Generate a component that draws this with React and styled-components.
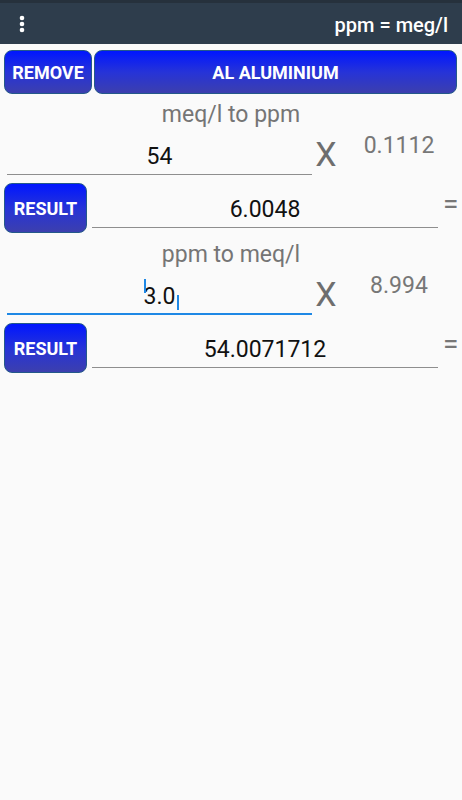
import React from 'react';
import styled, { createGlobalStyle } from 'styled-components';

const GlobalStyle = createGlobalStyle`
  body {
    margin: 0;
    background: #fafafa;
    font-family: Roboto, "Noto Sans", sans-serif;
  }
`;

const AppBar = styled.div`
  height: 41px;
  border-top: 3px solid #26313c;
  background: #2e3d4c;
  display: flex;
  align-items: center;
  justify-content: space-between;
  padding: 0 14px 0 18px;
`;

const BarTitle = styled.div`
  color: #fff;
  font-size: 20px;
  font-weight: 500;
  margin-top: 3px;
`;

const TopRow = styled.div`
  display: flex;
  gap: 2px;
  padding: 6px 5px 0 4px;
  height: 44px;
`;

const BlueButton = styled.button`
  box-sizing: border-box;
  height: ${p => p.$h || 44}px;
  width: ${p => (p.$w ? p.$w + 'px' : 'auto')};
  flex: ${p => (p.$grow ? 1 : 'none')};
  border: 1px solid #24598a;
  border-radius: 8px;
  background: linear-gradient(180deg, #0016ff 0%, #2633d8 50%, #3c3fae 100%);
  color: #fff;
  font-family: Roboto, sans-serif;
  font-size: 18px;
  font-weight: 700;
  padding: 0;
  cursor: pointer;
`;

const Section = styled.div`
  height: 140px;
`;

const SectionTitle = styled.div`
  text-align: center;
  color: #757575;
  font-size: 23px;
  line-height: 27px;
  padding-top: 7px;
`;

const InputRow = styled.div`
  display: grid;
  grid-template-columns: 305px 28px 1fr;
  padding: 0 4px 0 7px;
  align-items: start;
`;

const Field = styled.div`
  position: relative;
  text-align: center;
  color: #111;
  font-size: 23px;
  line-height: 27px;
  padding: ${p => (p.$top || 15)}px 0 ${p => (p.$focus ? 3 : 4)}px;
  border-bottom: ${p => (p.$focus ? '2px solid #1e88e5' : '1px solid #8e8e8e')};
`;

const Times = styled.div`
  text-align: center;
  color: #6e6e6e;
  font-size: 34px;
  line-height: 40px;
  padding-top: 6px;
`;

const Factor = styled.div`
  text-align: center;
  color: #777;
  font-size: 23px;
  line-height: 27px;
  padding-top: 4px;
`;

const ResultRow = styled.div`
  display: flex;
  align-items: flex-start;
  gap: 5px;
  padding-left: 4px;
  margin-top: 8px;
`;

const ResultField = styled(Field)`
  width: 346px;
  box-sizing: border-box;
`;

const Equals = styled.div`
  color: #777;
  font-size: 28px;
  line-height: 30px;
  padding-top: 6px;
`;

const Typed = styled.span`
  position: relative;
`;

const Handle = styled.span`
  position: absolute;
  width: 2px;
  background: #1e88e5;
  left: ${p => p.$x}px;
  top: ${p => p.$y}px;
  height: ${p => p.$h}px;
`;

const Dots = () => (
  <svg width="8" height="18" viewBox="0 0 8 18">
    <circle cx="4" cy="3" r="2.3" fill="#fff" />
    <circle cx="4" cy="9" r="2.3" fill="#fff" />
    <circle cx="4" cy="15" r="2.3" fill="#fff" />
  </svg>
);

function Converter({ title, value, factor, result, focused }) {
  return (
    <Section>
      <SectionTitle>{title}</SectionTitle>
      <InputRow>
        <Field $focus={focused}>
          {focused ? (
            <Typed>
              {value}
              <Handle $x={0} $y={-4} $h={14} />
              <Handle $x={33} $y={12} $h={15} />
            </Typed>
          ) : (
            value
          )}
        </Field>
        <Times>X</Times>
        <Factor>{factor}</Factor>
      </InputRow>
      <ResultRow>
        <BlueButton $w={83} $h={50}>RESULT</BlueButton>
        <ResultField $top={13}>{result}</ResultField>
        <Equals>=</Equals>
      </ResultRow>
    </Section>
  );
}

export default function App() {
  return (
    <>
      <GlobalStyle />
      <AppBar>
        <Dots />
        <BarTitle>ppm = meg/l</BarTitle>
      </AppBar>
      <TopRow>
        <BlueButton $w={88}>REMOVE</BlueButton>
        <BlueButton $grow>AL ALUMINIUM</BlueButton>
      </TopRow>
      <Converter title="meq/l to ppm" value="54" factor="0.1112" result="6.0048" />
      <Converter title="ppm to meq/l" value="3.0" factor="8.994" result="54.0071712" focused />
    </>
  );
}
